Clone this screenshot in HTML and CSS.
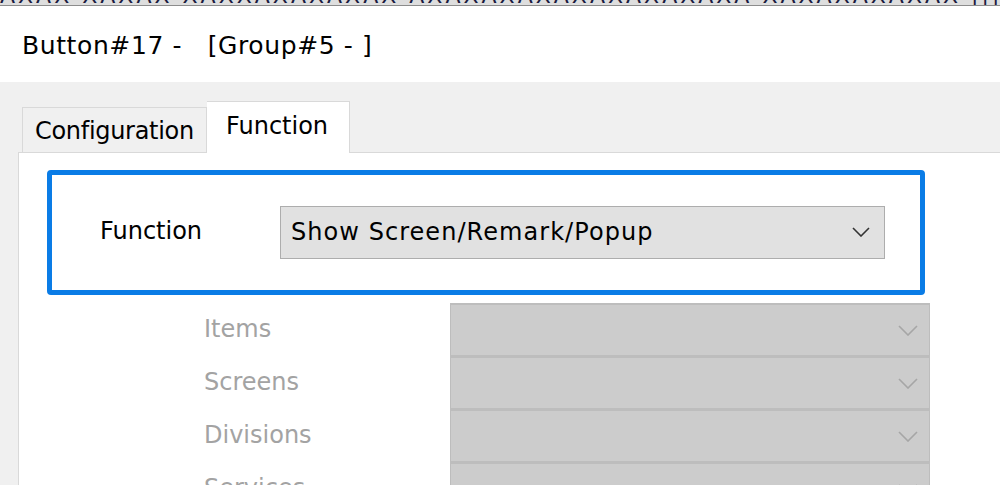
FILE: index.html
```html
<!DOCTYPE html>
<html lang="en">
<head>
    <meta charset="UTF-8">
    <title>Button#17</title>
    <link rel="stylesheet" href="styles.css">
</head>
<body>
    <div class="strip">
        <span>AXAX XAXAX XAXXAXAXAXAX AXAXAXAXAXAXAXAXAXA XAXAXAXAXAX ||| |||| |||||| ||||||| |||| |||| ||||||||| |||||| ||| |||| ||||| |||</span>
    </div>
    <div class="titlebar">Button#17 - &nbsp;&nbsp;[Group#5 - ]</div>
    <div class="body">
        <div class="tabs">
            <div class="tab">Configuration</div>
            <div class="tab active">Function</div>
        </div>
        <div class="panel">
            <div class="focus">
                <div class="label">Function</div>
                <div class="select">
                    <span>Show Screen/Remark/Popup</span>
                    <svg class="chev" width="18" height="10" viewBox="0 0 18 10"><path d="M1 1 L9 9 L17 1" fill="none" stroke="#333" stroke-width="1.6"/></svg>
                </div>
            </div>
            <div class="rows">
                <div class="row">
                    <div class="dlabel">Items</div>
                    <div class="dselect"><svg width="20" height="11" viewBox="0 0 20 11"><path d="M1 1 L10 10 L19 1" fill="none" stroke="#a6a6a6" stroke-width="1.6"/></svg></div>
                </div>
                <div class="row">
                    <div class="dlabel">Screens</div>
                    <div class="dselect"><svg width="20" height="11" viewBox="0 0 20 11"><path d="M1 1 L10 10 L19 1" fill="none" stroke="#a6a6a6" stroke-width="1.6"/></svg></div>
                </div>
                <div class="row">
                    <div class="dlabel">Divisions</div>
                    <div class="dselect"><svg width="20" height="11" viewBox="0 0 20 11"><path d="M1 1 L10 10 L19 1" fill="none" stroke="#a6a6a6" stroke-width="1.6"/></svg></div>
                </div>
                <div class="row">
                    <div class="dlabel">Services</div>
                    <div class="dselect"><svg width="20" height="11" viewBox="0 0 20 11"><path d="M1 1 L10 10 L19 1" fill="none" stroke="#a6a6a6" stroke-width="1.6"/></svg></div>
                </div>
            </div>
        </div>
    </div>
</body>
</html>
```

FILE: styles.css
```css
*{
    padding:0;
    margin:0;
    box-sizing: border-box;
}
html{
    height: 485px;
    overflow: hidden;
}
body{
    font-family: "DejaVu Sans", sans-serif;
    font-size: 24px;
    color: #000;
    background-color: #f0f0f0;
    overflow: hidden;
    height: 485px;
}
.strip{
    height: 6px;
    overflow: hidden;
    background-color: #dedede;
    border-bottom: 1px solid #8c8c8c;
    white-space: nowrap;
}
.strip span{
    display: block;
    font-size: 22px;
    line-height: 22px;
    margin-top: -15px;
    color: #1a1a40;
    letter-spacing: 3px;
}
.titlebar{
    height: 76px;
    background-color: #fff;
    padding-left: 22px;
    padding-top: 25px;
    line-height: 30px;
    font-size: 25px;
    letter-spacing: 0.6px;
    white-space: pre;
}
.body{
    padding-top: 19px;
}
.tabs{
    display: flex;
    align-items: flex-end;
    margin-left: 22px;
    position: relative;
    z-index: 2;
}
.tab{
    width: 185px;
    height: 45px;
    border: 1px solid #d9d9d9;
    border-bottom: none;
    background-color: #f0f0f0;
    padding-left: 12px;
    line-height: 46px;
    letter-spacing: -0.3px;
}
.tab.active{
    width: 143px;
    height: 52px;
    background-color: #fff;
    border-left: none;
    margin-bottom: -1px;
    padding-left: 19px;
    line-height: 48px;
    letter-spacing: 0;
}
.panel{
    margin-left: 18px;
    height: 333px;
    overflow: hidden;
    background-color: #fff;
    border-top: 1px solid #d9d9d9;
    border-left: 1px solid #d9d9d9;
}
.focus{
    display: flex;
    align-items: center;
    margin: 17px 0 0 28px;
    width: 878px;
    height: 125px;
    border: 5px solid #0a7ce6;
    border-radius: 4px;
}
.label{
    width: 228px;
    padding-left: 48px;
    padding-bottom: 4px;
}
.select{
    display: flex;
    align-items: center;
    justify-content: space-between;
    width: 605px;
    height: 53px;
    background-color: #e1e1e1;
    border: 1px solid #adadad;
    padding: 0 14px 2px 10px;
    letter-spacing: 1.05px;
}
.rows{
    margin: 8px 0 0 185px;
}
.row{
    display: flex;
    align-items: center;
}
.dlabel{
    width: 246px;
    color: #a3a3a3;
    padding-bottom: 2px;
}
.dselect{
    display: flex;
    align-items: center;
    justify-content: flex-end;
    width: 480px;
    height: 53px;
    background-color: #cccccc;
    border: 1px solid #bdbdbd;
    border-top-width: 2px;
    padding-right: 11px;
}
```
